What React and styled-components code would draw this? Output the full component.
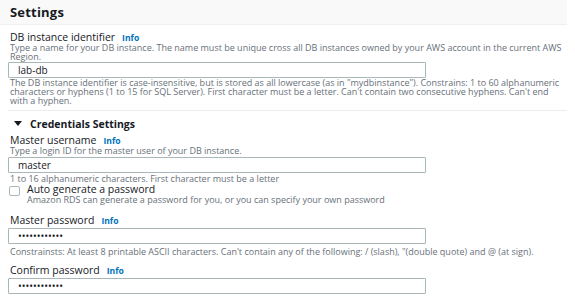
import React from "react";
import styled, { createGlobalStyle } from "styled-components";

const GlobalStyle = createGlobalStyle`
  body {
    margin: 0;
    background: #ffffff;
    font-family: "Open Sans", "DejaVu Sans", sans-serif;
    color: #16191f;
  }
`;

const Page = styled.div`
  width: 575px;
  height: 300px;
  overflow: hidden;
`;

const Header = styled.div`
  width: 567px;
  height: 25px;
  padding-left: 10px;
  display: flex;
  align-items: center;
  background: #f9f9f9;
  border-bottom: 1px solid #f0f0f0;
  box-sizing: border-box;
  h2 {
    margin: 0;
    font-size: 13px;
    font-weight: 700;
    letter-spacing: 0.2px;
  }
`;

const Body = styled.div`
  padding: 0 8px;
  width: 559px;
`;

const Field = styled.div`
  margin-top: ${(p) => p.$top || 0}px;
`;

const Label = styled.div`
  padding-left: 2px;
  height: 11px;
  line-height: 11px;
  font-size: 10.5px;
  display: flex;
  align-items: baseline;
  gap: 7px;
`;

const Info = styled.span`
  color: #0073bb;
  font-weight: 700;
  font-size: 8.6px;
`;

const Hint = styled.p`
  margin: ${(p) => p.$top || 0}px 0 0;
  padding-left: 2px;
  font-size: 9px;
  line-height: 9px;
  color: #687078;
`;

const Input = styled.input`
  display: block;
  box-sizing: border-box;
  width: 418px;
  height: 16px;
  margin-top: ${(p) => p.$top || 2}px;
  padding: 0 9px;
  border: 1px solid #aab7b8;
  border-radius: 1px;
  font-family: inherit;
  font-size: 10px;
  color: #16191f;
  outline: none;
  background: #fff;
`;

const Divider = styled.hr`
  margin: 5px 0 0;
  border: none;
  border-top: 1px solid #eaeded;
`;

const Section = styled.div`
  margin-top: 6px;
  padding-left: 6px;
  display: flex;
  align-items: center;
  gap: 8px;
  height: 13px;
  font-size: 10.5px;
  font-weight: 700;
`;

const Caret = styled.span`
  width: 0;
  height: 0;
  border-left: 4px solid transparent;
  border-right: 4px solid transparent;
  border-top: 5px solid #16191f;
`;

const CheckRow = styled.div`
  margin-top: 1px;
  display: flex;
  gap: 7px;
  padding-left: 1px;
`;

const Box = styled.span`
  flex: none;
  margin-top: 2px;
  width: 11px;
  height: 10px;
  box-sizing: border-box;
  border: 1px solid #aab7b8;
  border-radius: 2px;
  background: #fff;
`;

const CheckText = styled.div`
  strong {
    display: block;
    font-weight: 400;
    font-size: 10.5px;
    line-height: 11px;
  }
  span {
    display: block;
    font-size: 9px;
    line-height: 9px;
    color: #687078;
  }
`;

export default function App() {
  return (
    <Page>
      <GlobalStyle />
      <Header>
        <h2>Settings</h2>
      </Header>
      <Body>
        <Field $top={7}>
          <Label>
            DB instance identifier <Info>Info</Info>
          </Label>
          <Hint>
            Type a name for your DB instance. The name must be unique cross all DB
            instances owned by your AWS account in the current AWS Region.
          </Hint>
          <Input readOnly defaultValue="lab-db" $top={1} />
          <Hint $top={0}>
            The DB instance identifier is case-insensitive, but is stored as all
            lowercase (as in "mydbinstance"). Constrains: 1 to 60 alphanumeric
            characters or hyphens (1 to 15 for SQL Server). First character must be
            a letter. Can't contain two consecutive hyphens. Can't end with a
            hyphen.
          </Hint>
        </Field>
        <Divider />
        <Section>
          <Caret />
          Credentials Settings
        </Section>
        <Field $top={5}>
          <Label>
            Master username <Info>Info</Info>
          </Label>
          <Hint>Type a login ID for the master user of your DB instance.</Hint>
          <Input readOnly defaultValue="master" $top={2} />
          <Hint $top={1}>
            1 to 16 alphanumeric characters. First character must be a letter
          </Hint>
        </Field>
        <CheckRow>
          <Box />
          <CheckText>
            <strong>Auto generate a password</strong>
            <span>
              Amazon RDS can generate a password for you, or you can specify your
              own password
            </span>
          </CheckText>
        </CheckRow>
        <Field $top={11}>
          <Label>
            Master password <Info>Info</Info>
          </Label>
          <Input readOnly type="password" defaultValue="masterpasswd" $top={2} />
          <Hint $top={3}>
            Constrainsts: At least 8 printable ASCII characters. Can't contain any
            of the following: / (slash), "(double quote) and @ (at sign).
          </Hint>
        </Field>
        <Field $top={9}>
          <Label>
            Confirm password <Info>Info</Info>
          </Label>
          <Input readOnly type="password" defaultValue="masterpasswd" $top={2} />
        </Field>
      </Body>
    </Page>
  );
}
